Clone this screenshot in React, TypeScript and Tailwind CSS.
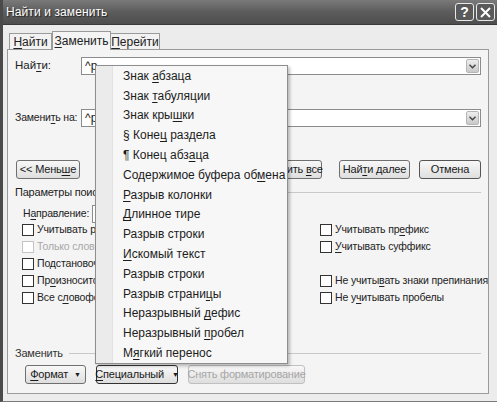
import React from "react"

// ─── CONSTANTS ────────────────────────────────────────────────────────────────

const FONT = "font-['Liberation_Sans','Open_Sans',sans-serif]"

const BTN =
  "flex h-[19px] shrink-0 items-center justify-center whitespace-nowrap rounded-[3px] border border-[#6f6f6f] bg-gradient-to-b from-[#f8f8f8] to-[#dedede] text-[11px] leading-none tracking-[-0.2px] text-[#1a1a1a]"

const MENU_ITEMS: [string, number | null][] = [
  ["Знак абзаца", 5],
  ["Знак табуляции", 5],
  ["Знак крышки", 8],
  ["§ Конец раздела", 6],
  ["¶ Конец абзаца", 11],
  ["Содержимое буфера обмена", 20],
  ["Разрыв колонки", 0],
  ["Длинное тире", 0],
  ["Разрыв строки", null],
  ["Искомый текст", 0],
  ["Разрыв строки", null],
  ["Разрыв страницы", 13],
  ["Неразрывный дефис", 12],
  ["Неразрывный пробел", 12],
  ["Мягкий перенос", 1],
]

// renders text with one underlined (mnemonic) letter
function Mn({ text, at }: { text: string; at: number | null }) {
  if (at === null) return <span className="whitespace-pre">{text}</span>
  return (
    <span className="whitespace-pre">
      {text.slice(0, at)}
      <span className="underline underline-offset-2">{text[at]}</span>
      {text.slice(at + 1)}
    </span>
  )
}

function Check({ label, at = null, disabled = false }: { label: string; at?: number | null; disabled?: boolean }) {
  return (
    <div className="flex h-[17px] items-center gap-[3px] whitespace-nowrap">
      <span
        className={`h-[12px] w-[12px] shrink-0 border bg-white ${
          disabled ? "border-[#c4c4c4]" : "border-[#333]"
        }`}
      />
      <span
        className={`text-[10.5px] leading-none tracking-[-0.15px] ${
          disabled ? "text-[#a8a8a8]" : "text-[#222]"
        }`}
      >
        <Mn text={label} at={at} />
      </span>
    </div>
  )
}

function Combo() {
  return (
    <div className="flex h-[18px] flex-1 items-center justify-between border border-[#8c8c8c] bg-white pl-[3px] pr-[1px]">
      <span className="text-[12px] leading-none text-[#222]">^p</span>
      <span className="flex h-[14px] w-[13px] items-center justify-center rounded-[2px] border border-[#b5b5b5] bg-gradient-to-b from-[#eeeeee] to-[#c9c9c9]">
        <svg width="7" height="5" viewBox="0 0 7 5">
          <path d="M0.5 0.8 L3.5 3.8 L6.5 0.8" fill="none" stroke="#444" strokeWidth="1.4" />
        </svg>
      </span>
    </div>
  )
}

// ─── COMPONENT ────────────────────────────────────────────────────────────────

export default function App() {
  return (
    <div className={`relative h-[409px] w-[497px] overflow-hidden bg-white ${FONT}`}>
      <div className="flex h-[402px] flex-col border-l-[3px] border-b border-[#4a4a4a] border-b-[#7a7a7a] bg-[#ececec]">

        {/* ── TITLE BAR ─────────────────────────────────────────────── */}
        <div className="flex h-[25px] shrink-0 items-center justify-between border-b border-[#3a3a3a] bg-gradient-to-b from-[#7a7a7a] via-[#5c5c5c] to-[#4e4e4e] pl-[3px] pr-[2px]">
          <span className="text-[12px] tracking-[0.1px] text-white [text-shadow:1px_1px_1px_#222]">
            Найти и заменить
          </span>
          <div className="flex gap-[2px]">
            <span className="flex h-[18px] w-[19px] items-center justify-center rounded-[3px] border border-[#e8e8e8] bg-[#5a5a5a] text-[14px] font-bold leading-none text-white">
              ?
            </span>
            <span className="flex h-[18px] w-[19px] items-center justify-center rounded-[3px] border border-[#e8e8e8] bg-[#5a5a5a]">
              <svg width="11" height="11" viewBox="0 0 11 11">
                <path d="M1 1 L10 10 M10 1 L1 10" stroke="white" strokeWidth="2" />
              </svg>
            </span>
          </div>
        </div>

        {/* ── TABS ──────────────────────────────────────────────────── */}
        <div className="mt-[6px] flex h-[18px] shrink-0 items-end pl-[6px] text-[12px] leading-none text-[#222]">
          <div className="flex h-[16px] w-[43px] items-center justify-center border border-b-0 border-[#9a9a9a] bg-[#f2f2f2]">
            <Mn text="Найти" at={0} />
          </div>
          <div className="relative z-10 -mb-px flex h-[19px] w-[59px] items-center justify-center border border-b-0 border-[#9a9a9a] bg-[#f4f4f4]">
            <Mn text="Заменить" at={0} />
          </div>
          <div className="flex h-[16px] w-[49px] items-center justify-center border border-b-0 border-l-0 border-[#9a9a9a] bg-[#f2f2f2]">
            <Mn text="Перейти" at={0} />
          </div>
        </div>

        {/* ── PANEL ─────────────────────────────────────────────────── */}
        <div className="ml-[4px] mr-[8px] flex h-[345px] shrink-0 flex-col border border-[#9a9a9a] bg-[#f4f4f4] px-[7px] text-[#222]">
          <div className="mt-[7px] flex h-[18px] items-center">
            <span className="w-[66px] whitespace-nowrap text-[11.5px]">
              <Mn text="Найти:" at={3} />
            </span>
            <Combo />
          </div>

          <div className="mt-[34px] flex h-[18px] items-center">
            <span className="w-[66px] whitespace-nowrap text-[10.5px] tracking-[-0.2px]">
              <Mn text="Заменить на:" at={6} />
            </span>
            <Combo />
          </div>

          {/* buttons row */}
          <div className="mt-[33px] flex h-[19px] items-center">
            <div className={`${BTN} ml-[1px] w-[64px]`}>
              <Mn text="<< Меньше" at={7} />
            </div>
            <div className="flex-1" />
            <div className={`${BTN} w-[64px]`}>
              <Mn text="Заменить" at={6} />
            </div>
            <div className={`${BTN} ml-[4px] w-[66px]`}>
              <Mn text="Заменить все" at={9} />
            </div>
            <div className={`${BTN} ml-[17px] w-[71px]`}>
              <Mn text="Найти далее" at={3} />
            </div>
            <div className={`${BTN} ml-[9px] w-[62px] border-[#555]`}>Отмена</div>
          </div>

          {/* search options */}
          <div className="mt-[6px] flex h-[14px] items-center gap-[4px]">
            <span className="whitespace-nowrap text-[11px] tracking-[-0.2px]">Параметры поиска</span>
            <span className="h-px flex-1 bg-[#c8c8c8]" />
          </div>

          <div className="mt-[5px] flex h-[20px] items-center pl-[8px]">
            <span className="w-[69px] whitespace-nowrap text-[10.5px] tracking-[-0.2px]">
              <Mn text="Направление:" at={1} />
            </span>
            <div className="h-[18px] w-[80px] border border-[#8c8c8c] bg-white" />
          </div>

          <div className="-mt-[3px] flex pl-[7px]">
            <div className="w-[298px] shrink-0">
              <Check label="Учитывать регистр" at={null} />
              <Check label="Только слово целиком" disabled />
              <Check label="Подстановочные знаки" />
              <Check label="Произносится как" at={2} />
              <Check label="Все словоформы" at={5} />
            </div>
            <div className="shrink-0">
              <Check label="Учитывать префикс" at={12} />
              <Check label="Учитывать суффикс" at={0} />
              <div className="h-[17px]" />
              <Check label="Не учитывать знаки препинания" at={8} />
              <Check label="Не учитывать пробелы" at={4} />
            </div>
          </div>

          {/* replace group */}
          <div className="mt-[40px] flex h-[14px] items-center gap-[6px]">
            <span className="whitespace-nowrap text-[11px] tracking-[-0.2px] text-[#333]">Заменить</span>
            <span className="h-px flex-1 bg-[#c8c8c8]" />
          </div>

          <div className="mt-[5px] flex items-center pl-[10px]">
            <div className={`${BTN} w-[61px] gap-[6px]`}>
              <Mn text="Формат" at={0} />
              <span className="text-[7px]">▼</span>
            </div>
            <div className={`${BTN} ml-[10px] w-[82px] gap-[8px] border-[#333]`}>
              <Mn text="Специальный" at={0} />
              <span className="text-[7px]">▼</span>
            </div>
            <div className={`${BTN} ml-[10px] w-[117px] border-[#c0c0c0] text-[#a6a6a6]`}>
              Снять форматирование
            </div>
          </div>
        </div>
      </div>

      {/* ── SPECIAL MENU (overlay) ────────────────────────────────── */}
      <div className="absolute left-[95px] top-[65px] flex h-[299px] w-[193px] border border-[#8e8e8e] bg-[#f7f7f7] shadow-[2px_2px_3px_rgba(0,0,0,0.25)]">
        <div className="w-[17px] shrink-0 border-r border-[#e2e2e2] bg-[#ebebeb]" />
        <div className="flex flex-col pl-[10px]">
          {MENU_ITEMS.map(([t, at], i) => (
            <div key={i} className="flex h-[19.8px] items-center whitespace-nowrap text-[12px] text-[#1c1c1c]">
              <Mn text={t} at={at} />
            </div>
          ))}
        </div>
      </div>
    </div>
  )
}
